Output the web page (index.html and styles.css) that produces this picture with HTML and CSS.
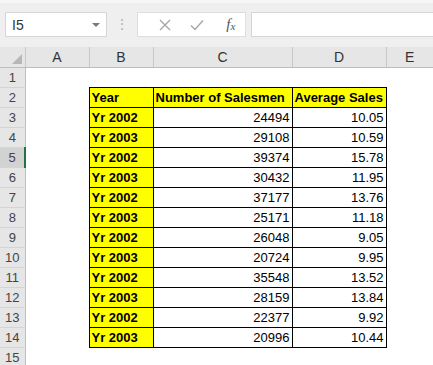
FILE: index.html
```html
<!DOCTYPE html>
<html lang="en">
<head>
    <meta charset="UTF-8">
    <title>Sales sheet</title>
    <link rel="stylesheet" href="styles.css">
</head>
<body>
    <div class="ribbon">
        <div class="name-box">
            <span class="cell-ref">I5</span>
            <span class="drop-arrow"></span>
        </div>
        <div class="grip">⋮</div>
        <div class="fx-buttons">
            <span class="fx-btn">
                <svg width="14" height="14" viewBox="0 0 14 14"><path d="M2 2 L12 12 M12 2 L2 12" stroke="#a6a6a6" stroke-width="1.4" fill="none"/></svg>
            </span>
            <span class="fx-btn">
                <svg width="16" height="14" viewBox="0 0 16 14"><path d="M2 7.5 L6 11.5 L14 2.5" stroke="#a6a6a6" stroke-width="1.4" fill="none"/></svg>
            </span>
            <span class="fx-btn fx-label"><i>f</i><i class="x">x</i></span>
        </div>
        <div class="formula-input"></div>
    </div>

    <table class="sheet">
        <colgroup>
            <col class="c-row">
            <col class="c-a">
            <col class="c-b">
            <col class="c-c">
            <col class="c-d">
            <col class="c-e">
        </colgroup>
        <thead>
            <tr>
                <th class="corner"><span class="tri"></span></th>
                <th class="col-head">A</th>
                <th class="col-head">B</th>
                <th class="col-head">C</th>
                <th class="col-head">D</th>
                <th class="col-head last">E</th>
            </tr>
        </thead>
        <tbody>
            <tr><th class="row-head">1</th><td></td><td></td><td></td><td></td><td></td></tr>
            <tr>
                <th class="row-head">2</th><td></td>
                <td class="data hl bold">Year</td>
                <td class="data hl bold">Number of Salesmen</td>
                <td class="data hl bold">Average Sales</td><td></td>
            </tr>
            <tr><th class="row-head">3</th><td></td><td class="data hl bold">Yr 2002</td><td class="data num">24494</td><td class="data num">10.05</td><td></td></tr>
            <tr><th class="row-head">4</th><td></td><td class="data hl bold">Yr 2003</td><td class="data num">29108</td><td class="data num">10.59</td><td></td></tr>
            <tr><th class="row-head active">5</th><td></td><td class="data hl bold">Yr 2002</td><td class="data num">39374</td><td class="data num">15.78</td><td></td></tr>
            <tr><th class="row-head">6</th><td></td><td class="data hl bold">Yr 2003</td><td class="data num">30432</td><td class="data num">11.95</td><td></td></tr>
            <tr><th class="row-head">7</th><td></td><td class="data hl bold">Yr 2002</td><td class="data num">37177</td><td class="data num">13.76</td><td></td></tr>
            <tr><th class="row-head">8</th><td></td><td class="data hl bold">Yr 2003</td><td class="data num">25171</td><td class="data num">11.18</td><td></td></tr>
            <tr><th class="row-head">9</th><td></td><td class="data hl bold">Yr 2002</td><td class="data num">26048</td><td class="data num">9.05</td><td></td></tr>
            <tr><th class="row-head">10</th><td></td><td class="data hl bold">Yr 2003</td><td class="data num">20724</td><td class="data num">9.95</td><td></td></tr>
            <tr><th class="row-head">11</th><td></td><td class="data hl bold">Yr 2002</td><td class="data num">35548</td><td class="data num">13.52</td><td></td></tr>
            <tr><th class="row-head">12</th><td></td><td class="data hl bold">Yr 2003</td><td class="data num">28159</td><td class="data num">13.84</td><td></td></tr>
            <tr><th class="row-head">13</th><td></td><td class="data hl bold">Yr 2002</td><td class="data num">22377</td><td class="data num">9.92</td><td></td></tr>
            <tr><th class="row-head">14</th><td></td><td class="data hl bold">Yr 2003</td><td class="data num">20996</td><td class="data num">10.44</td><td></td></tr>
            <tr><th class="row-head">15</th><td></td><td></td><td></td><td></td><td></td></tr>
        </tbody>
    </table>
</body>
</html>
```

FILE: styles.css
```css
* {
    margin: 0;
    padding: 0;
    box-sizing: border-box;
}

body {
    font-family: 'Liberation Sans', Arial, sans-serif;
    background: white;
    width: 433px;
    height: 365px;
    overflow: hidden;
}

/* formula bar area */
.ribbon {
    height: 47px;
    background: #efefef;
    border-top: 3px solid #f7f7f7;
    display: flex;
    align-items: flex-start;
    padding: 9px 0 0 5px;
}

.name-box {
    width: 102px;
    height: 25px;
    background: white;
    border: 1px solid #d6d6d6;
    display: flex;
    align-items: center;
    justify-content: space-between;
    padding: 0 6px 0 6px;
}

.cell-ref {
    font-size: 14px;
    color: #333;
}

.drop-arrow {
    width: 0;
    height: 0;
    border-left: 4px solid transparent;
    border-right: 4px solid transparent;
    border-top: 4px solid #7a7a7a;
}

.grip {
    width: 30px;
    text-align: center;
    color: #b5b5b5;
    font-size: 14px;
    line-height: 25px;
}

.fx-buttons {
    width: 109px;
    height: 25px;
    background: white;
    border: 1px solid #dedede;
    display: flex;
    align-items: center;
    padding-left: 11px;
}

.fx-btn {
    width: 36px;
    display: flex;
    align-items: center;
    justify-content: center;
}

.fx-label {
    font-family: 'Liberation Serif', serif;
    font-size: 15px;
    color: #555;
    padding-left: 4px;
}

.fx-label .x {
    font-size: 11px;
    margin-top: 3px;
}

.formula-input {
    flex: 1;
    height: 25px;
    margin-left: 5px;
    background: white;
    border: 1px solid #d6d6d6;
    border-right: none;
}

/* sheet */
.sheet {
    border-collapse: collapse;
    table-layout: fixed;
    width: 433px;
}

.c-row { width: 25px; }
.c-a { width: 64px; }
.c-b { width: 64px; }
.c-c { width: 139px; }
.c-d { width: 94px; }
.c-e { width: 47px; }

.sheet tr {
    height: 20px;
}

.sheet td {
    height: 20px;
    font-size: 13px;
    color: #000;
    white-space: nowrap;
    overflow: hidden;
}

.corner {
    background: #e6e6e6;
    border-right: 1px solid #c8c8c8;
    border-bottom: 1px solid #bdbdbd;
    position: relative;
}

.tri {
    position: absolute;
    right: 3px;
    bottom: 3px;
    width: 0;
    height: 0;
    border-left: 10px solid transparent;
    border-bottom: 10px solid #b7b7b7;
}

.col-head {
    background: #e6e6e6;
    font-weight: normal;
    font-size: 14px;
    color: #333;
    border-right: 1px solid #c8c8c8;
    border-bottom: 1px solid #bdbdbd;
}

.col-head.last {
    border-right: none;
}

.row-head {
    background: #e6e6e6;
    font-weight: normal;
    font-size: 13px;
    color: #444;
    border-right: 1px solid #bdbdbd;
    border-bottom: 1px solid #d4d4d4;
    text-align: center;
}

.row-head.active {
    background: #d2d2d2;
    border-right: 2px solid #217346;
}

.data {
    border: 1px solid #000;
    padding: 0 2px;
}

.hl {
    background: #ffff00;
}

.bold {
    font-weight: bold;
}

.num {
    text-align: right;
}
```
